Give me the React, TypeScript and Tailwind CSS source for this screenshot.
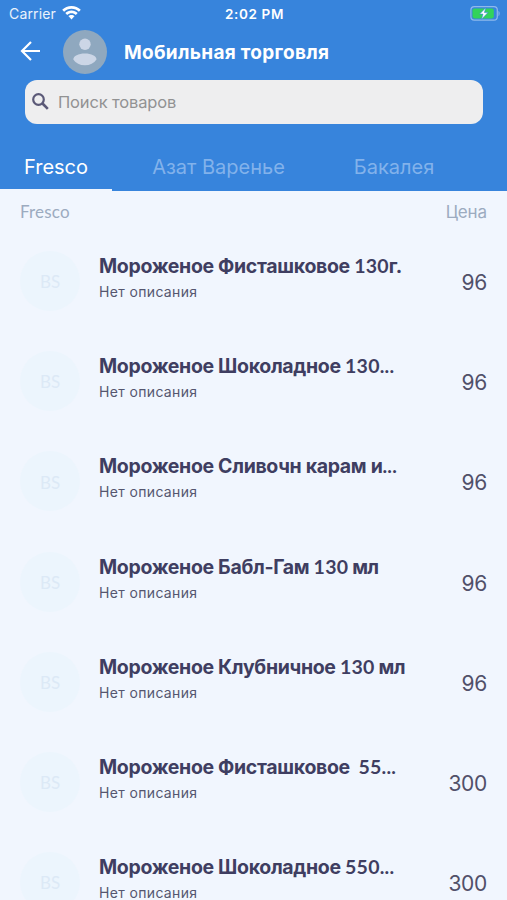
interface Product {
  id: number;
  name: string;
  amount: string;
  unit?: string;
  price: number;
}

const products: Product[] = [
  { id: 1, name: 'Мороженое Фисташковое ', amount: '130', unit: 'г.', price: 96 },
  { id: 2, name: 'Мороженое Шоколадное ', amount: '130...', price: 96 },
  { id: 3, name: 'Мороженое Сливочн карам и', amount: '...', price: 96 },
  { id: 4, name: 'Мороженое Бабл-Гам ', amount: '130', unit: ' мл', price: 96 },
  { id: 5, name: 'Мороженое Клубничное ', amount: '130', unit: ' мл', price: 96 },
  { id: 6, name: 'Мороженое Фисташковое  ', amount: '55...', price: 300 },
  { id: 7, name: 'Мороженое Шоколадное ', amount: '550...', price: 300 },
];

function StatusBar() {
  return (
    <div className="grid h-7 grid-cols-3 items-center pr-[7px] pl-[9px] text-white">
      <div className="flex items-center gap-1.5">
        <span className="-mt-0.5 text-[14px] tracking-[0.15px] text-white/90">Carrier</span>
        <svg className="h-[14px] w-[19px] -translate-y-px" viewBox="0 0 19 14" fill="currentColor">
          <path d="M9.5 0C5.9 0 2.6 1.4 0.2 3.7L2.1 5.7C4 3.9 6.6 2.8 9.5 2.8S15 3.9 16.9 5.7L18.8 3.7C16.4 1.4 13.1 0 9.5 0Z" />
          <path d="M9.5 4.5C7.1 4.5 4.9 5.4 3.3 6.9L5.2 8.9C6.3 7.8 7.8 7.2 9.5 7.2S12.7 7.8 13.8 8.9L15.7 6.9C14.1 5.4 11.9 4.5 9.5 4.5Z" />
          <path d="M9.5 8.9C8.3 8.9 7.2 9.4 6.4 10.1L9.5 13.4L12.6 10.1C11.8 9.4 10.7 8.9 9.5 8.9Z" />
        </svg>
      </div>
      <span className="text-center text-[13.5px] font-semibold tracking-[0.65px]">2:02 PM</span>
      <svg className="h-[15px] w-[30px] -translate-y-px justify-self-end" viewBox="0 0 30 15">
        <rect x="0.9" y="0.7" width="26.4" height="13.4" rx="3.4" fill="none" stroke="#8fb9ec" strokeWidth="1.2" />
        <path d="M28.5 5V10C30 9.4 30 5.6 28.5 5Z" fill="#8fb9ec" />
        <rect x="2.5" y="2.4" width="21.3" height="10" rx="1.8" fill="#32d35b" />
        <path d="M15.8 1.7L9.6 8.1H13L11.5 13.2L18 6.6H14.4Z" fill="#fff" stroke="#3784dc" strokeWidth="0.6" />
      </svg>
    </div>
  );
}

function Header() {
  return (
    <header className="h-[191px] bg-[#3784dc]">
      <StatusBar />
      <div className="flex h-12 items-center pl-5">
        <svg className="h-5 w-[21px] -translate-y-px" viewBox="0 0 21 20" fill="none" stroke="#fff" strokeWidth="2.2">
          <path d="M20 10H2.5M11 1L2 10L11 19" />
        </svg>
        <svg className="ml-[22px] size-11" viewBox="0 0 44 44">
          <circle cx="22" cy="22" r="22" fill="#8fa8bf" />
          <circle cx="22" cy="14.3" r="5.7" fill="#ccd6e6" />
          <path d="M10.3 29.4C10.3 26.2 15.5 23.6 21.9 23.6S33.5 26.2 33.5 29.4C31 33.2 27 35.2 21.9 35.2S12.8 33.2 10.3 29.4Z" fill="#ccd6e6" />
        </svg>
        <h1 className="ml-[17px] pt-[3px] text-[19px] font-bold tracking-[0.3px] whitespace-nowrap text-white">
          Мобильная торговля
        </h1>
      </div>
      <div className="mt-1 mr-6 ml-[25px] flex h-11 items-center rounded-xl bg-[#eeeeef] pl-[7px]">
        <svg className="size-[17px] -translate-y-px" viewBox="0 0 17 17" fill="none" stroke="#5b5977">
          <circle cx="6.5" cy="6.5" r="5.3" strokeWidth="2.2" />
          <path d="M10.5 10.5L15.8 15.8" strokeWidth="2.6" />
        </svg>
        <span className="ml-[9px] text-[16.5px] tracking-[-0.15px] text-[#929293]">Поиск товаров</span>
      </div>
      <nav className="flex h-[67px] text-[20px] leading-[86px] whitespace-nowrap text-[#82b2eb]">
        <div className="h-[67px] w-28 border-b-2 border-[#f1f6fe] text-center text-white">Fresco</div>
        <div className="w-[213px] text-center">Азат Варенье</div>
        <div className="w-[138px] text-center">Бакалея</div>
      </nav>
    </header>
  );
}

function ProductRow({ product }: { product: Product }) {
  return (
    <li className="flex h-[100.2px] px-5">
      <div className="mt-5 flex size-[60px] shrink-0 items-center justify-center rounded-full bg-[#ecf5fd] pt-0.5 font-['Lato'] text-[17px] text-[#dce9f6]">
        BS
      </div>
      <div className="mt-[21px] ml-[19px] flex-1 whitespace-nowrap text-[#3f3e61]">
        <p className="text-[19.5px] leading-[28px] font-bold tracking-[-0.33px] whitespace-pre">
          {product.name}
          <span className="font-['Lato'] tracking-[0.25px]">{product.amount}</span>
          <span className="tracking-[-0.7px]">{product.unit}</span>
        </p>
        <p className="text-[14px] leading-[24px] tracking-[0.35px] text-[#55566f]">Нет описания</p>
      </div>
      <span className="mt-9 text-[21px] leading-[31px] tracking-[-0.3px] text-[#515069]">{product.price}</span>
    </li>
  );
}

export default function App() {
  return (
    <div className="h-[900px] w-[507px] overflow-hidden bg-[#f1f6fe] font-['Inter','Liberation_Sans',sans-serif]">
      <Header />
      <div className="flex h-10 items-center justify-between px-5 pt-0.5 text-[17px] text-[#9cabc0]">
        <span className="font-['Lato'] tracking-[0.2px]">Fresco</span>
        <span className="pt-px tracking-[-0.1px]">Цена</span>
      </div>
      <ul>
        {products.map((product) => (
          <ProductRow key={product.id} product={product} />
        ))}
      </ul>
    </div>
  );
}
